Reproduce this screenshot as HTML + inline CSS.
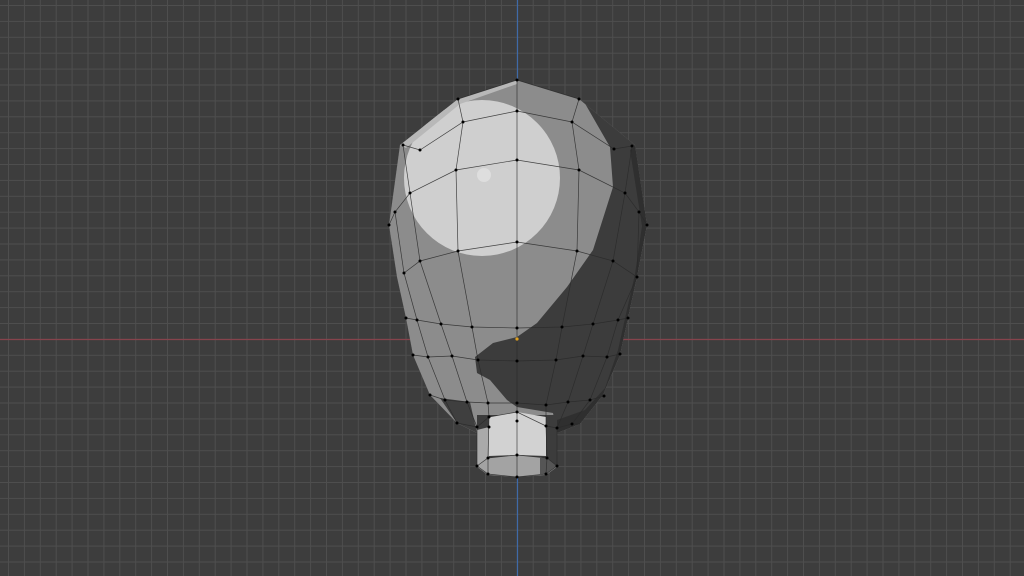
<!DOCTYPE html>
<html><head><meta charset="utf-8"><style>
html,body{margin:0;padding:0;background:#3d3d3d;width:1024px;height:576px;overflow:hidden}
svg{display:block}
</style></head><body>
<svg width="1024" height="576" viewBox="0 0 1024 576" xmlns="http://www.w3.org/2000/svg">
<defs>
<pattern id="g" x="8" y="5" width="15.9" height="15.9" patternUnits="userSpaceOnUse">
<path d="M0 0.5H15.9M0.5 0V15.9" stroke="#4e4e4e" stroke-width="1" fill="none"/>
</pattern>
<clipPath id="head"><path d="M517,80 L579,99 L635,145 L647,225 L637,277 L628,318 L620,355 L603,395 L580,424 L557,433 L557,467 L546,475 L517,477 L488,475 L477,467 L477,433 L457,423 L430,395 L413,355 L406,318 L397,277 L389,225 L400,145 L458,99 Z"/></clipPath>
</defs>
<rect width="1024" height="576" fill="#3d3d3d"/>
<rect width="1024" height="576" fill="url(#g)"/>
<line x1="0" y1="339.5" x2="1024" y2="339.5" stroke="#86434c" stroke-width="1.2"/>
<line x1="517.5" y1="0" x2="517.5" y2="576" stroke="#3f6aa8" stroke-width="1.2"/>
<g clip-path="url(#head)">
<rect x="380" y="70" width="280" height="420" fill="#8c8c8c"/>
<circle cx="482" cy="178" r="78" fill="#cfcfcf"/>
<circle cx="484" cy="175" r="7" fill="#dedede"/>
<path d="M583,100 L610,147 L613,187 L593,250 L567,287 L537,323 L517,337 L493,343 L475,357 L477,373 L490,380 L507,400 L517,407 L553,413 L557,433 L580,424 L603,395 L620,355 L628,318 L637,277 L647,225 L635,145 L600,100 Z" fill="#3c3c3c"/>
<path d="M636,145 L647,225 L637,277 L628,318 L620,355 L603,395 L580,424 L557,433 L557,420 L585,410 L605,388 L618,350 L626,314 L635,274 L642,226 L630,150 Z" fill="#2f2f2f"/>
<path d="M440,398 L470,402 L477,433 L457,423 Z" fill="#3f3f3f"/>
<path d="M400,145 L389,225 L397,277 L406,318 L413,355 L430,395 L422,395 L405,355 L397,318 L389,277 L382,225 L394,145 Z" fill="#6a6a6a"/>
<path d="M400,145 L458,99 L517,80 L517,84 L460,104 L406,148 Z" fill="#b8b8b8"/>
<rect x="477" y="415" width="80" height="52" fill="#3c3c3c"/>
<path d="M489,417 L517,412 L546,417 L546,456 L517,455 L489,456 Z" fill="#d2d2d2"/>
<path d="M477,430 L489,427 L489,458 L477,466 Z" fill="#aaaaaa"/>
<path d="M477,466 L488,458 L517,455 L547,458 L557,466 L546,474 L517,477 L488,474 Z" fill="#a3a3a3"/>
<path d="M540,458 L547,458 L557,466 L546,474 L540,474 Z" fill="#555"/>
</g>
<g fill="none" stroke="#2a2a2a" stroke-width="0.7" opacity="0.85">
<polyline points="458,99 517,80 579,99"/>
<polyline points="403,145 420,150 463,122 517,111 572,122 614,149 632,146"/>
<polyline points="389,225 395,212 410,193 456,170 517,160 579,170 625,193 639,212 647,225"/>
<polyline points="404,273 420,261 458,251 517,242 577,251 613,261 637,277"/>
<polyline points="406,318 417,320 441,324 472,327 517,328 562,327 593,324 618,320 628,318"/>
<polyline points="413,355 428,357 452,356 478,360 517,361 556,360 583,356 607,357 620,354"/>
<polyline points="430,395 445,400 467,402 488,403 517,403 546,405 568,402 590,400 604,396"/>
<polyline points="457,423 477,427 489,417 517,412 546,426 557,428 572,424 580,424"/>
<polyline points="477,466 488,458 517,455 547,458 557,466"/>
<polyline points="477,466 488,474 517,477 546,474 557,466"/>
<polyline points="517,80 517,477"/>
<polyline points="458,99 463,122 456,170 458,251 472,327 478,360 488,403 489,417 488,458 488,474"/>
<polyline points="403,145 410,193 420,261 441,324 452,356 467,402 477,427 477,466"/>
<polyline points="395,212 404,273 417,320 428,357 445,400 457,423"/>
<polyline points="579,99 572,122 579,170 577,251 562,327 556,360 546,405 546,426 547,458 546,474"/>
<polyline points="632,146 625,193 613,261 593,324 583,356 568,402 557,428 557,466"/>
<polyline points="639,212 637,277 618,320 607,357 590,400 572,424"/>
</g>
<g fill="#000">
<circle cx="517" cy="80" r="1.5"/><circle cx="458" cy="99" r="1.5"/><circle cx="579" cy="99" r="1.5"/>
<circle cx="403" cy="145" r="1.5"/><circle cx="420" cy="150" r="1.5"/><circle cx="463" cy="122" r="1.5"/><circle cx="517" cy="111" r="1.5"/><circle cx="572" cy="122" r="1.5"/><circle cx="614" cy="149" r="1.5"/><circle cx="632" cy="146" r="1.5"/>
<circle cx="389" cy="225" r="1.5"/><circle cx="395" cy="212" r="1.5"/><circle cx="410" cy="193" r="1.5"/><circle cx="456" cy="170" r="1.5"/><circle cx="517" cy="160" r="1.5"/><circle cx="579" cy="170" r="1.5"/><circle cx="625" cy="193" r="1.5"/><circle cx="639" cy="212" r="1.5"/><circle cx="647" cy="225" r="1.5"/>
<circle cx="404" cy="273" r="1.5"/><circle cx="420" cy="261" r="1.5"/><circle cx="458" cy="251" r="1.5"/><circle cx="517" cy="242" r="1.5"/><circle cx="577" cy="251" r="1.5"/><circle cx="613" cy="261" r="1.5"/><circle cx="637" cy="277" r="1.5"/>
<circle cx="406" cy="318" r="1.5"/><circle cx="417" cy="320" r="1.5"/><circle cx="441" cy="324" r="1.5"/><circle cx="472" cy="327" r="1.5"/><circle cx="517" cy="328" r="1.5"/><circle cx="562" cy="327" r="1.5"/><circle cx="593" cy="324" r="1.5"/><circle cx="618" cy="320" r="1.5"/><circle cx="628" cy="318" r="1.5"/>
<circle cx="413" cy="355" r="1.5"/><circle cx="428" cy="357" r="1.5"/><circle cx="452" cy="356" r="1.5"/><circle cx="478" cy="360" r="1.5"/><circle cx="517" cy="361" r="1.5"/><circle cx="556" cy="360" r="1.5"/><circle cx="583" cy="356" r="1.5"/><circle cx="607" cy="357" r="1.5"/><circle cx="620" cy="354" r="1.5"/>
<circle cx="430" cy="395" r="1.5"/><circle cx="445" cy="400" r="1.5"/><circle cx="467" cy="402" r="1.5"/><circle cx="488" cy="403" r="1.5"/><circle cx="517" cy="403" r="1.5"/><circle cx="546" cy="405" r="1.5"/><circle cx="568" cy="402" r="1.5"/><circle cx="590" cy="400" r="1.5"/><circle cx="604" cy="396" r="1.5"/>
<circle cx="457" cy="423" r="1.5"/><circle cx="477" cy="427" r="1.5"/><circle cx="489" cy="417" r="1.5"/><circle cx="517" cy="412" r="1.5"/><circle cx="546" cy="426" r="1.5"/><circle cx="557" cy="428" r="1.5"/><circle cx="572" cy="424" r="1.5"/>
<circle cx="517" cy="421" r="1.5"/><circle cx="489" cy="427" r="1.5"/>
<circle cx="477" cy="466" r="1.5"/><circle cx="488" cy="458" r="1.5"/><circle cx="517" cy="455" r="1.5"/><circle cx="547" cy="458" r="1.5"/><circle cx="557" cy="466" r="1.5"/><circle cx="488" cy="474" r="1.5"/><circle cx="517" cy="477" r="1.5"/><circle cx="546" cy="474" r="1.5"/>
</g>
<circle cx="517" cy="339" r="1.6" fill="#e0a020"/>
</svg>
</body></html>
